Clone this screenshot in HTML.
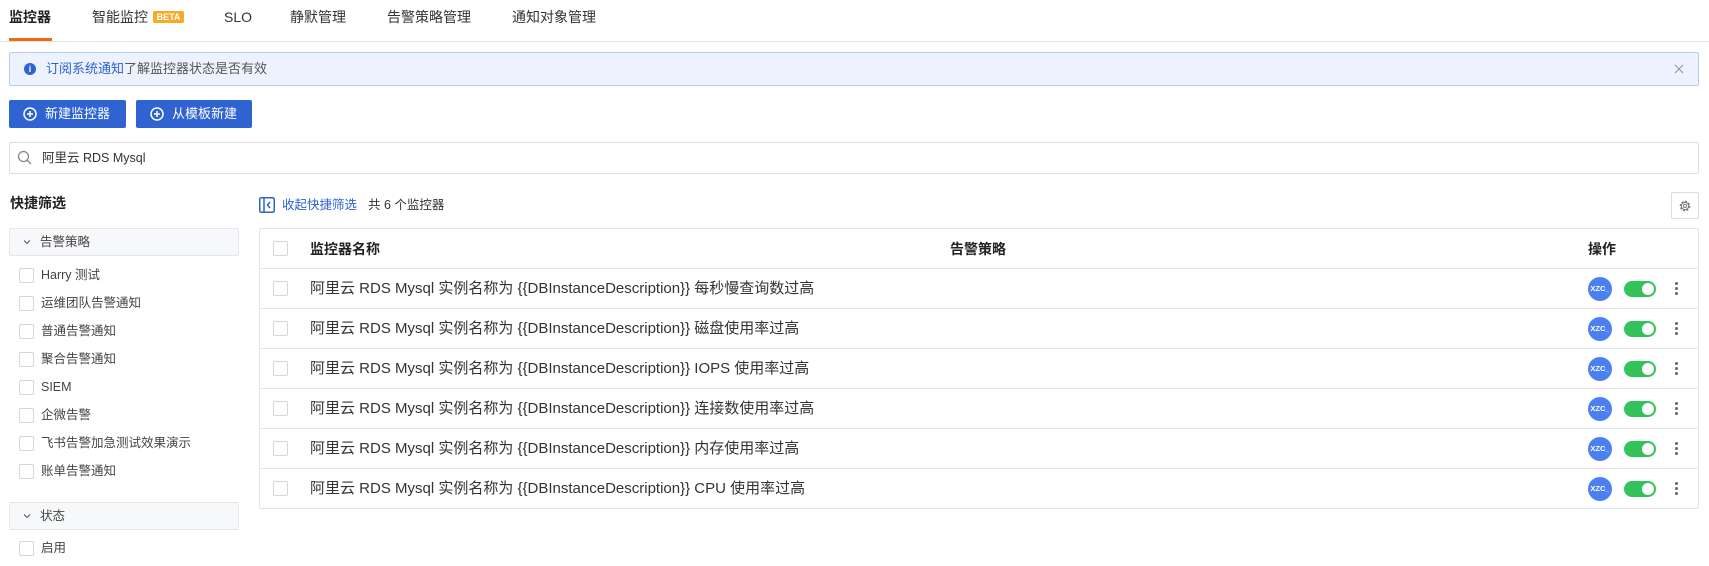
<!DOCTYPE html>
<html><head><meta charset="utf-8"><style>
*{box-sizing:border-box;margin:0;padding:0}
body{width:1709px;height:566px;overflow:hidden;background:#fff;font-family:"Liberation Sans","Noto Sans CJK SC",sans-serif;color:#333;position:relative}
.a{position:absolute;white-space:nowrap}
.tab{position:absolute;top:8px;font-size:14px;color:#333;line-height:18px}
.cb{position:absolute;width:15px;height:15px;border:1px solid #d6d6d6;border-radius:2px;background:#fff}
.side{position:absolute;left:41px;font-size:12.5px;color:#444;line-height:16px}
.gh{position:absolute;left:9px;width:230px;height:28px;background:#f7f8fa;border:1px solid #e3e5ea;border-radius:2px;font-size:12.5px;color:#444;line-height:26px;padding-left:30px}
.gh svg{position:absolute;left:13px;top:9px}
.row{position:absolute;left:259px;width:1440px;height:40px;border-top:1px solid #e6e6ea}
.row .t{position:absolute;left:51px;top:10px;font-size:15px;color:#333;line-height:20px;white-space:nowrap}
.row .cb{left:14px;top:12px}
.av{position:absolute;left:1329px;top:8px;width:24px;height:24px;border-radius:50%;background:#4a80f0;color:#fff;font-size:7.5px;font-weight:bold;line-height:24px;text-align:center}
.tg{position:absolute;left:1365px;top:12px;width:32px;height:16px;border-radius:8px;background:#34c35a}
.tg:after{content:"";position:absolute;right:2px;top:2px;width:12px;height:12px;border-radius:50%;background:#fff}
.dots{position:absolute;left:1416px;top:13px;width:3px}
.dots i{display:block;width:3px;height:3px;border-radius:50%;background:#666;margin-bottom:2px}
.btn{position:absolute;top:100px;height:28px;background:#2e63d1;border-radius:2px;color:#fff;font-size:13px;line-height:28px;padding-left:36px}
.btn svg{position:absolute;left:14px;top:7px}
</style></head><body>
<div class="tab" style="left:9px;font-weight:bold;color:#222">监控器</div>
<div style="position:absolute;left:9px;top:38px;width:43px;height:3px;background:#f06a0f"></div>
<div class="tab" style="left:92px">智能监控</div>
<div class="a" style="left:153px;top:11px;width:31px;height:12px;background:#f7a928;border-radius:2px;color:#fff;font-size:9px;font-weight:bold;line-height:12px;text-align:center">BETA</div>
<div class="tab" style="left:224px">SLO</div>
<div class="tab" style="left:290px">静默管理</div>
<div class="tab" style="left:387px">告警策略管理</div>
<div class="tab" style="left:512px">通知对象管理</div>
<div style="position:absolute;left:0;top:41px;width:1709px;height:1px;background:#e2e2e2"></div>

<div style="position:absolute;left:9px;top:52px;width:1690px;height:34px;background:#edf3fe;border:1px solid #b4cdf6;border-radius:2px"></div>
<div class="a" style="left:24px;top:63px;width:12px;height:12px;border-radius:50%;background:#2e63d1;color:#fff;font-size:9px;font-weight:bold;text-align:center;line-height:12px">i</div>
<div class="a" style="left:46px;top:61px;font-size:13px;line-height:16px;color:#555"><span style="color:#2e63d1">订阅系统通知</span>了解监控器状态是否有效</div>
<svg class="a" style="left:1674px;top:64px" width="10" height="10"><path d="M1 1L9 9M9 1L1 9" stroke="#999" stroke-width="1.2"/></svg>

<div class="btn" style="left:9px;width:117px"><svg width="14" height="14"><circle cx="7" cy="7" r="6" fill="none" stroke="#fff" stroke-width="1.5"/><path d="M7 4v6M4 7h6" stroke="#fff" stroke-width="1.5"/></svg>新建监控器</div>
<div class="btn" style="left:136px;width:116px"><svg width="14" height="14"><circle cx="7" cy="7" r="6" fill="none" stroke="#fff" stroke-width="1.5"/><path d="M7 4v6M4 7h6" stroke="#fff" stroke-width="1.5"/></svg>从模板新建</div>

<div style="position:absolute;left:9px;top:142px;width:1690px;height:32px;border:1px solid #dcdde2;border-radius:2px"></div>
<svg class="a" style="left:17px;top:150px" width="15" height="15"><circle cx="6.5" cy="6.5" r="5" fill="none" stroke="#888" stroke-width="1.3"/><path d="M10 10l4 4" stroke="#888" stroke-width="1.3"/></svg>
<div class="a" style="left:42px;top:150px;font-size:12.5px;line-height:16px;color:#333">阿里云 RDS Mysql</div>

<div class="a" style="left:10px;top:194px;font-size:14px;font-weight:bold;color:#222;line-height:18px">快捷筛选</div>
<div class="gh" style="top:228px"><svg width="8" height="8"><path d="M1 2.5L4 5.5L7 2.5" fill="none" stroke="#555" stroke-width="1"/></svg>告警策略</div>
<div class="cb" style="left:19px;top:268px"></div><div class="side" style="top:267px">Harry 测试</div>
<div class="cb" style="left:19px;top:296px"></div><div class="side" style="top:295px">运维团队告警通知</div>
<div class="cb" style="left:19px;top:324px"></div><div class="side" style="top:323px">普通告警通知</div>
<div class="cb" style="left:19px;top:352px"></div><div class="side" style="top:351px">聚合告警通知</div>
<div class="cb" style="left:19px;top:380px"></div><div class="side" style="top:379px">SIEM</div>
<div class="cb" style="left:19px;top:408px"></div><div class="side" style="top:407px">企微告警</div>
<div class="cb" style="left:19px;top:436px"></div><div class="side" style="top:435px">飞书告警加急测试效果演示</div>
<div class="cb" style="left:19px;top:464px"></div><div class="side" style="top:463px">账单告警通知</div>
<div class="gh" style="top:502px"><svg width="8" height="8"><path d="M1 2.5L4 5.5L7 2.5" fill="none" stroke="#555" stroke-width="1"/></svg>状态</div>
<div class="cb" style="left:19px;top:541px"></div><div class="side" style="top:540px">启用</div>

<svg class="a" style="left:259px;top:197px" width="16" height="16"><rect x="0.75" y="0.75" width="14.5" height="14.5" rx="1.5" fill="none" stroke="#2e63d1" stroke-width="1.5"/><path d="M5 1v14" stroke="#2e63d1" stroke-width="1.5"/><path d="M11 5L8.5 8L11 11" fill="none" stroke="#2e63d1" stroke-width="1.5"/></svg>
<div class="a" style="left:282px;top:197px;font-size:12.5px;color:#2e63d1;line-height:16px">收起快捷筛选</div>
<div class="a" style="left:368px;top:197px;font-size:12.5px;color:#333;line-height:16px">共 6 个监控器</div>
<div style="position:absolute;left:1671px;top:192px;width:28px;height:27px;border:1px solid #dcdde2;border-radius:2px"></div>
<svg class="a" style="left:1678px;top:199px" width="14" height="14"><circle cx="7" cy="7" r="4.6" fill="none" stroke="#777" stroke-width="1.4" stroke-dasharray="2 1.6"/><circle cx="7" cy="7" r="3.6" fill="none" stroke="#777" stroke-width="1"/><circle cx="7" cy="7" r="1.6" fill="none" stroke="#777" stroke-width="1"/></svg>

<div style="position:absolute;left:259px;top:228px;width:1440px;height:281px;border:1px solid #e3e4e8;border-radius:2px"></div>
<div class="cb" style="left:273px;top:241px"></div>
<div class="a" style="left:310px;top:239px;font-size:14px;font-weight:bold;color:#222;line-height:20px">监控器名称</div>
<div class="a" style="left:950px;top:239px;font-size:14px;font-weight:bold;color:#222;line-height:20px">告警策略</div>
<div class="a" style="left:1588px;top:239px;font-size:14px;font-weight:bold;color:#222;line-height:20px">操作</div>

<div class="row" style="top:268px"><div class="cb"></div><div class="t">阿里云 RDS Mysql 实例名称为 {{DBInstanceDescription}} 每秒慢查询数过高</div><div class="av">XZC_</div><div class="tg"></div><div class="dots"><i></i><i></i><i></i></div></div>
<div class="row" style="top:308px"><div class="cb"></div><div class="t">阿里云 RDS Mysql 实例名称为 {{DBInstanceDescription}} 磁盘使用率过高</div><div class="av">XZC_</div><div class="tg"></div><div class="dots"><i></i><i></i><i></i></div></div>
<div class="row" style="top:348px"><div class="cb"></div><div class="t">阿里云 RDS Mysql 实例名称为 {{DBInstanceDescription}} IOPS 使用率过高</div><div class="av">XZC_</div><div class="tg"></div><div class="dots"><i></i><i></i><i></i></div></div>
<div class="row" style="top:388px"><div class="cb"></div><div class="t">阿里云 RDS Mysql 实例名称为 {{DBInstanceDescription}} 连接数使用率过高</div><div class="av">XZC_</div><div class="tg"></div><div class="dots"><i></i><i></i><i></i></div></div>
<div class="row" style="top:428px"><div class="cb"></div><div class="t">阿里云 RDS Mysql 实例名称为 {{DBInstanceDescription}} 内存使用率过高</div><div class="av">XZC_</div><div class="tg"></div><div class="dots"><i></i><i></i><i></i></div></div>
<div class="row" style="top:468px"><div class="cb"></div><div class="t">阿里云 RDS Mysql 实例名称为 {{DBInstanceDescription}} CPU 使用率过高</div><div class="av">XZC_</div><div class="tg"></div><div class="dots"><i></i><i></i><i></i></div></div>
</body></html>
